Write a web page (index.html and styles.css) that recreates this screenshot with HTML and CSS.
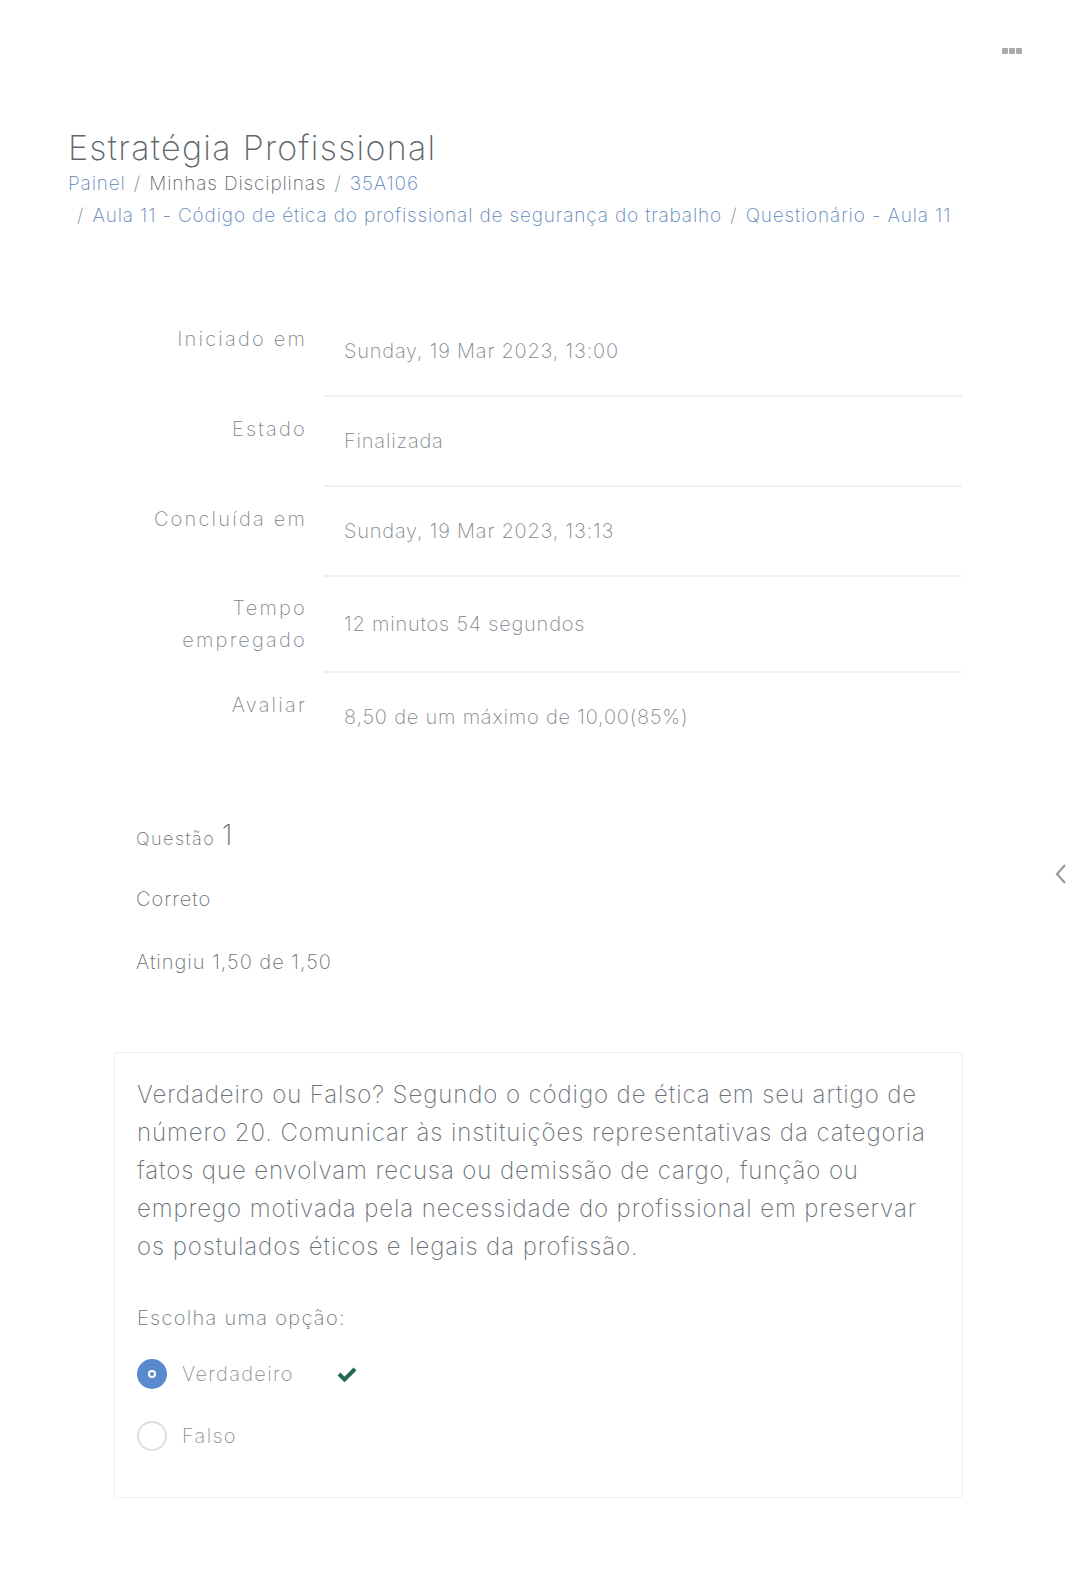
FILE: index.html
```html
<!DOCTYPE html>
<html lang="pt">
  <head>
    <meta charset="UTF-8" />
    <meta name="viewport" content="width=device-width, initial-scale=1.0" />
    <title>Questionário - Aula 11</title>
    <link rel="stylesheet" href="styles.css">
  </head>
  <body>
    <div class="topbar">
      <span class="dots"><i></i><i></i><i></i></span>
    </div>

    <div class="page">
      <header class="page-header">
        <h1>Estratégia Profissional</h1>
        <nav class="crumbs">
          <div class="crumb-line">
            <a href="#">Painel</a>
            <span class="sep">/</span>
            <span class="plain">Minhas Disciplinas</span>
            <span class="sep">/</span>
            <a href="#">35A106</a>
          </div>
          <div class="crumb-line second">
            <span class="sep">/</span>
            <a href="#">Aula 11 - Código de ética do profissional de segurança do trabalho</a>
            <span class="sep">/</span>
            <a href="#">Questionário - Aula 11</a>
          </div>
        </nav>
      </header>

      <div class="summary">
        <div class="label">Iniciado em</div>
        <div class="value">Sunday, 19 Mar 2023, 13:00</div>

        <div class="label">Estado</div>
        <div class="value">Finalizada</div>

        <div class="label">Concluída em</div>
        <div class="value">Sunday, 19 Mar 2023, 13:13</div>

        <div class="label mid">Tempo empregado</div>
        <div class="value mid">12 minutos 54 segundos</div>

        <div class="label">Avaliar</div>
        <div class="value last">8,50 de um máximo de 10,00(85%)</div>
      </div>

      <div class="question-info">
        <div class="qno">Questão <span class="num">1</span></div>
        <div class="state">Correto</div>
        <div class="grade">Atingiu 1,50 de 1,50</div>
      </div>

      <div class="question-box">
        <p class="qtext">Verdadeiro ou Falso? Segundo o código de ética em seu artigo de número 20. Comunicar às instituições representativas da categoria fatos que envolvam recusa ou demissão de cargo, função ou emprego motivada pela necessidade do profissional em preservar os postulados éticos e legais da profissão.</p>
        <div class="prompt">Escolha uma opção:</div>
        <div class="answer">
          <label class="option">
            <span class="radio checked"></span>
            <span class="opt-text">Verdadeiro</span>
            <svg class="tick" width="20" height="16" viewBox="0 0 20 16"><path d="M2 8 L7.5 13.5 L18 3" fill="none" stroke="#23694a" stroke-width="4"/></svg>
          </label>
          <label class="option">
            <span class="radio"></span>
            <span class="opt-text">Falso</span>
          </label>
        </div>
      </div>
    </div>

    <span class="drawer-toggle">
      <svg width="16" height="24" viewBox="0 0 16 24"><path d="M12 3 L4 12 L12 21" fill="none" stroke="#999" stroke-width="2.2"/></svg>
    </span>
  </body>
</html>
```

FILE: styles.css
```css
body {
  margin: 0;
  font-family: Inter, "DejaVu Sans", sans-serif;
  font-weight: 200;
  color: #6a7178;
  background: #fff;
}
.topbar {
  display: flex;
  justify-content: flex-end;
  padding: 48px 55px 0 0;
  height: 27px;
}
.dots {
  display: flex;
  gap: 1px;
}
.dots i {
  width: 6px;
  height: 6px;
  border-radius: 1px;
  background: #aaa;
}
.page {
  padding: 0 114px 60px 68px;
}
.page-header {
  margin-top: 53px;
}
h1 {
  margin: 0;
  font-size: 34px;
  font-weight: 200;
  letter-spacing: 1.3px;
  color: #5f666c;
  line-height: 40px;
}
.crumbs {
  font-size: 19px;
  line-height: 32px;
  letter-spacing: 0.85px;
}
.crumb-line {
  white-space: nowrap;
}
.crumb-line.second {
  padding-left: 7px;
}
.crumbs a {
  color: #5b85b8;
  text-decoration: none;
}
.crumbs .plain {
  color: #5f666c;
}
.crumbs .sep {
  color: #7a8a9a;
  padding: 0 2px;
}
.summary {
  margin: 75px 0 0 68px;
  display: grid;
  grid-template-columns: 171px 638px;
  column-gap: 17px;
}
.label {
  text-align: right;
  font-size: 20px;
  line-height: 32px;
  letter-spacing: 2.2px;
  color: #80868c;
  padding-top: 16px;
}
.label.mid {
  padding-top: 15px;
}
.value {
  font-size: 20px;
  line-height: 32px;
  letter-spacing: 0.8px;
  padding: 28px 0 28px 20px;
  border-bottom: 2px solid #eef0f1;
  color: #80868c;
}
.value.mid {
  padding: 31px 0 31px 20px;
}
.value.last {
  border-bottom: none;
}
.question-info {
  margin: 57px 0 0 68px;
  font-size: 20px;
  letter-spacing: 1px;
  color: #6a7178;
}
.qno {
  font-size: 18px;
  letter-spacing: 1.5px;
}
.qno .num {
  font-size: 28px;
  letter-spacing: 0;
}
.state {
  margin-top: 35px;
}
.grade {
  margin-top: 39px;
}
.question-box {
  margin: 78px 0 0 46px;
  border: 1px solid #eeeff0;
  border-radius: 3px;
  padding: 23px 22px 46px;
}
.qtext {
  margin: 0;
  font-size: 24px;
  line-height: 38px;
  letter-spacing: 0.9px;
  color: #6a7178;
}
.prompt {
  margin-top: 40px;
  font-size: 20px;
  letter-spacing: 1.3px;
  color: #70777d;
}
.answer {
  margin-top: 29px;
  display: flex;
  flex-direction: column;
  gap: 32px;
}
.option {
  display: flex;
  align-items: center;
  gap: 15px;
  font-size: 20px;
  letter-spacing: 1.3px;
  color: #8a9096;
}
.radio {
  width: 26px;
  height: 26px;
  border: 2px solid #dedede;
  border-radius: 50%;
  box-sizing: content-box;
  display: flex;
  align-items: center;
  justify-content: center;
}
.radio.checked {
  background: #5a8ace;
  border-color: #5a8ace;
}
.radio.checked::after {
  content: "";
  width: 4px;
  height: 4px;
  border: 2px solid #fff;
  border-radius: 50%;
  background: #5a8ace;
}
.tick {
  margin-left: 28px;
}
.drawer-toggle {
  position: absolute;
  top: 862px;
  left: 1053px;
}
```
